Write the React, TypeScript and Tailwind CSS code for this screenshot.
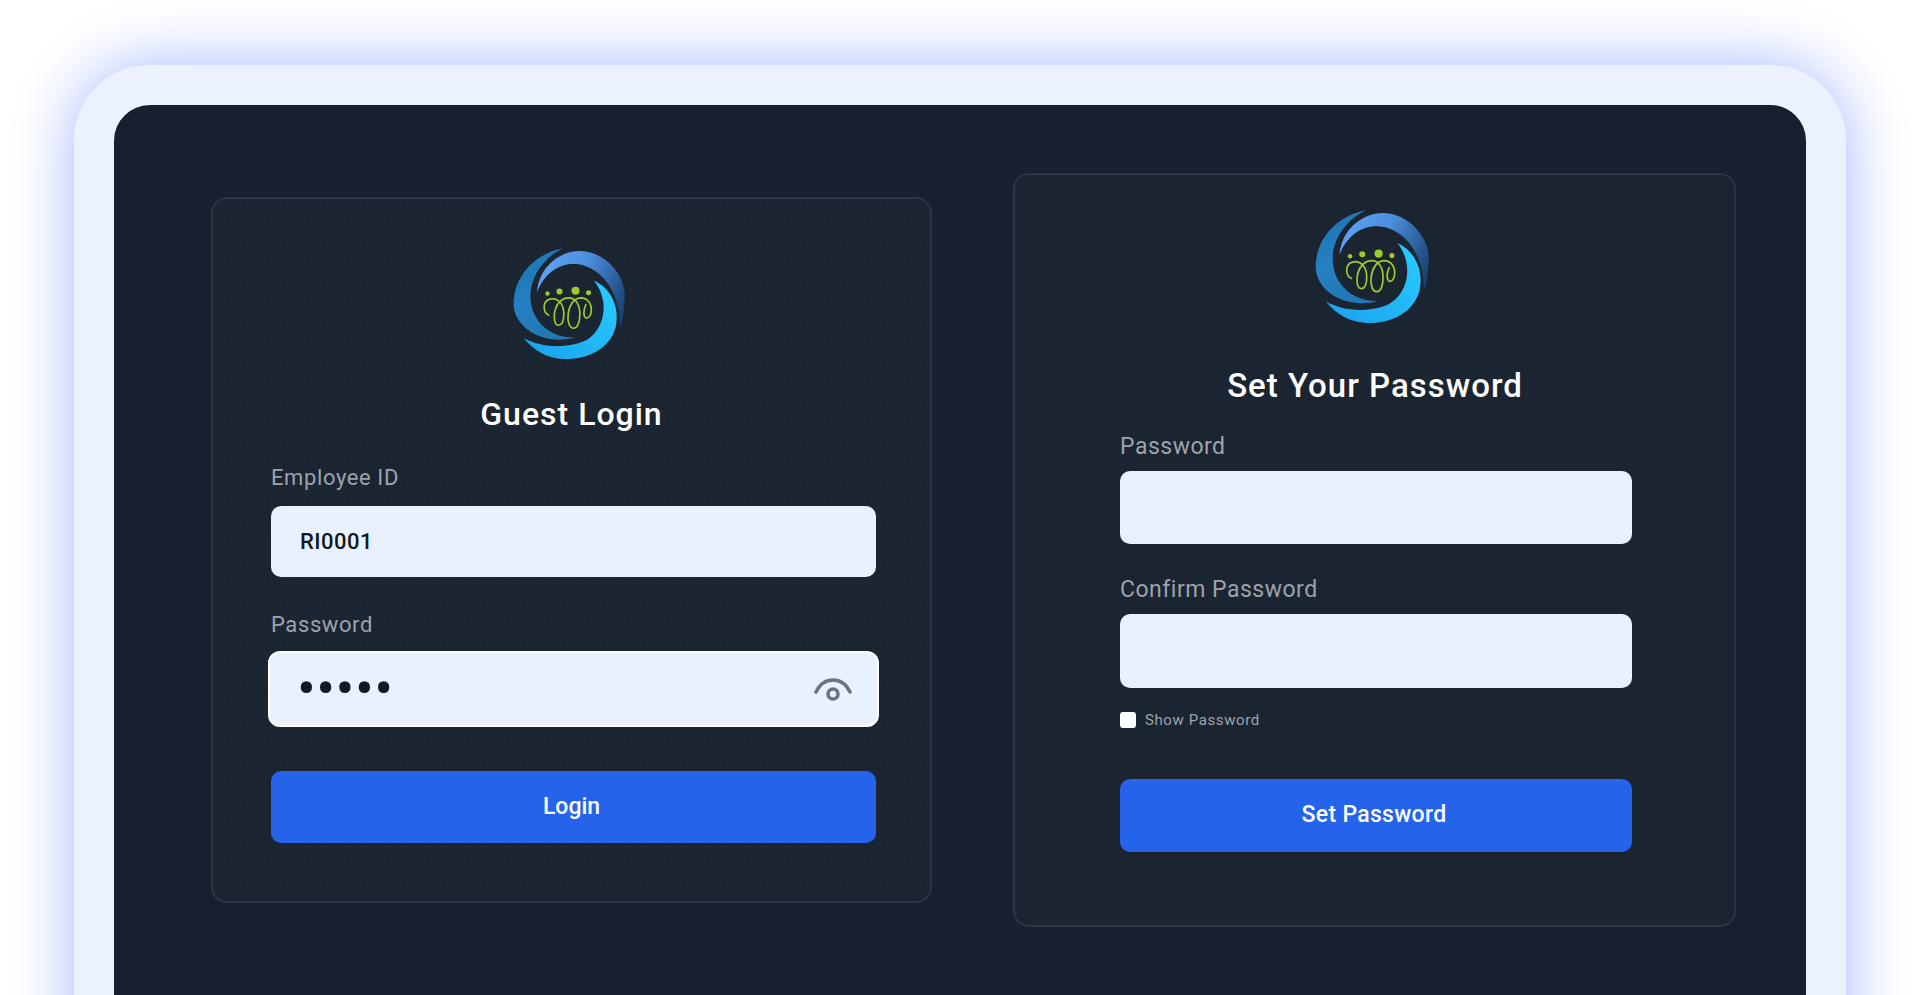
const FONT = "font-['Roboto',_'Liberation_Sans',_sans-serif]"

function Logo({ id, className }: { id: string; className: string }) {
  return (
    <svg viewBox="98 80 338 338" className={className}>
      <defs>
        <linearGradient id={`${id}-a`} x1="0" y1="0" x2="0.6" y2="1">
          <stop offset="0" stopColor="#1f6fae" />
          <stop offset="0.5" stopColor="#2480c2" />
          <stop offset="1" stopColor="#2277b4" />
        </linearGradient>
        <linearGradient id={`${id}-b`} x1="0" y1="0.3" x2="1" y2="0.7">
          <stop offset="0" stopColor="#5da2f5" />
          <stop offset="0.45" stopColor="#4a8ddc" />
          <stop offset="1" stopColor="#1a4474" />
        </linearGradient>
        <linearGradient id={`${id}-c`} x1="0" y1="1" x2="1" y2="0.2">
          <stop offset="0" stopColor="#1a9fec" />
          <stop offset="1" stopColor="#27c9ff" />
        </linearGradient>
      </defs>
      <path fill={`url(#${id}-a)`} d="M248 84C160 100 100 170 100 250C100 322 190 378 288 350C220 356 150 310 150 225C150 170 190 110 248 84Z" />
      <path fill={`url(#${id}-b)`} d="M170 215C175 140 240 90 300 92C380 95 436 170 432 230C431 265 427 295 418 322C420 240 385 160 310 135C250 118 195 150 170 215Z" />
      <path fill={`url(#${id}-c)`} d="M340 180C395 205 418 265 405 320C388 385 320 417 250 415C200 413 160 390 130 352C180 380 250 385 310 362C370 335 392 245 340 180Z" />
      <circle cx="201" cy="219" r="6.5" fill="#9ccc2e" />
      <circle cx="237" cy="213" r="9" fill="#9ccc2e" />
      <circle cx="285" cy="211" r="12" fill="#9ccc2e" />
      <circle cx="324" cy="217" r="7.5" fill="#9ccc2e" />
      <path
        fill="none"
        stroke="#9ccc2e"
        strokeWidth="5"
        strokeLinecap="round"
        d="M205 284C188 276 184 244 208 236C232 230 250 250 250 280C250 302 243 314 234 314C222 314 218 290 224 268C230 246 246 232 264 232C286 232 298 252 298 282C298 308 290 323 279 323C268 323 260 306 263 280C266 254 280 233 300 232C322 232 334 250 332 272C331 288 322 294 316 292C308 288 308 268 316 252"
      />
    </svg>
  )
}

function Eye() {
  return (
    <svg viewBox="0 0 38 24" className="h-[24px] w-[38px] text-[#6b7280]" fill="none" stroke="currentColor" strokeWidth="3.5" strokeLinecap="round">
      <path d="M2 14C6 6 12 2 19 2C26 2 32 6 36 14" />
      <circle cx="19" cy="16" r="5" />
    </svg>
  )
}

function Label({ children, className = '' }: { children: string; className?: string }) {
  return <label className={`block leading-[26px] text-[#9ca3af] ${className}`}>{children}</label>
}

export default function App() {
  return (
    <div className={`h-[995px] overflow-hidden bg-white px-[74px] pt-[65px] ${FONT}`}>
      <div className="flex h-[1100px] items-start gap-[81px] rounded-[76px] border-[40px] border-[#ecf1fe] bg-[#181f2e] pl-[97px] shadow-[0_0_64px_#a3b7ff]">
        {/* Guest login */}
        <div className="mt-[92px] flex h-[706px] w-[721px] shrink-0 flex-col rounded-[16px] border-2 border-[#2c3543] bg-[#1b2431] bg-[radial-gradient(#1f2936_1px,transparent_1px)] bg-[length:5px_5px] pl-[58px] pr-[54px] pt-[48px]">
          <div className="flex justify-center pr-[8px]">
            <Logo id="l1" className="h-[113px] w-[113px]" />
          </div>
          <h1 className="mt-[34px] pr-[4px] text-center text-[32px] font-medium leading-[40px] tracking-[1px] text-white">Guest Login</h1>
          <Label className="mt-[31px] text-[22px] tracking-[0.6px]">Employee ID</Label>
          <input
            readOnly
            value="RI0001"
            className="mt-[15px] h-[71px] w-full rounded-[10px] bg-[#e9f0fe] px-[29px] text-[22px] font-medium tracking-[0.5px] text-[#111827] outline-none"
          />
          <Label className="mt-[35px] text-[22px] tracking-[0.6px]">Password</Label>
          <div className="relative -mx-[3px] mt-[13px]">
            <input
              readOnly
              type="password"
              value="12345"
              className="h-[76px] w-full rounded-[12px] border-2 border-white bg-[#e9f0fe] px-[27px] text-[56px] tracking-[0.4px] text-[#111827] outline-none"
            />
            <div className="absolute right-[27px] top-[27px]">
              <Eye />
            </div>
          </div>
          <button className="mt-[44px] h-[72px] w-full rounded-[10px] bg-[#2563eb] pr-[4px] text-[23px] font-medium text-white">Login</button>
        </div>

        {/* Set password */}
        <div className="mt-[68px] flex h-[754px] w-[723px] shrink-0 flex-col rounded-[16px] border-2 border-[#2c3543] bg-[#1b2431] pl-[105px] pr-[102px] pt-[34px]">
          <div className="flex justify-center pr-[8px]">
            <Logo id="l2" className="h-[115px] w-[115px]" />
          </div>
          <h1 className="mt-[40px] pr-[2px] text-center text-[33px] font-medium leading-[44px] tracking-[1px] text-white">Set Your Password</h1>
          <Label className="mt-[26px] text-[23px] tracking-[0.5px]">Password</Label>
          <input readOnly className="mt-[11px] h-[73px] w-full rounded-[10px] bg-[#e9f0fe] outline-none" />
          <Label className="mt-[33px] text-[23px] tracking-[0.5px]">Confirm Password</Label>
          <input readOnly className="mt-[11px] h-[74px] w-full rounded-[10px] bg-[#e9f0fe] outline-none" />
          <div className="mt-[24px] flex items-center gap-[9px]">
            <span className="h-[16px] w-[16px] rounded-[3px] bg-white" />
            <span className="text-[15px] leading-[16px] tracking-[0.6px] text-[#9ca3af]">Show Password</span>
          </div>
          <button className="mt-[51px] h-[73px] w-full rounded-[10px] bg-[#2563eb] pr-[4px] text-[23px] font-medium tracking-[0.3px] text-white">Set Password</button>
        </div>
      </div>
    </div>
  )
}
